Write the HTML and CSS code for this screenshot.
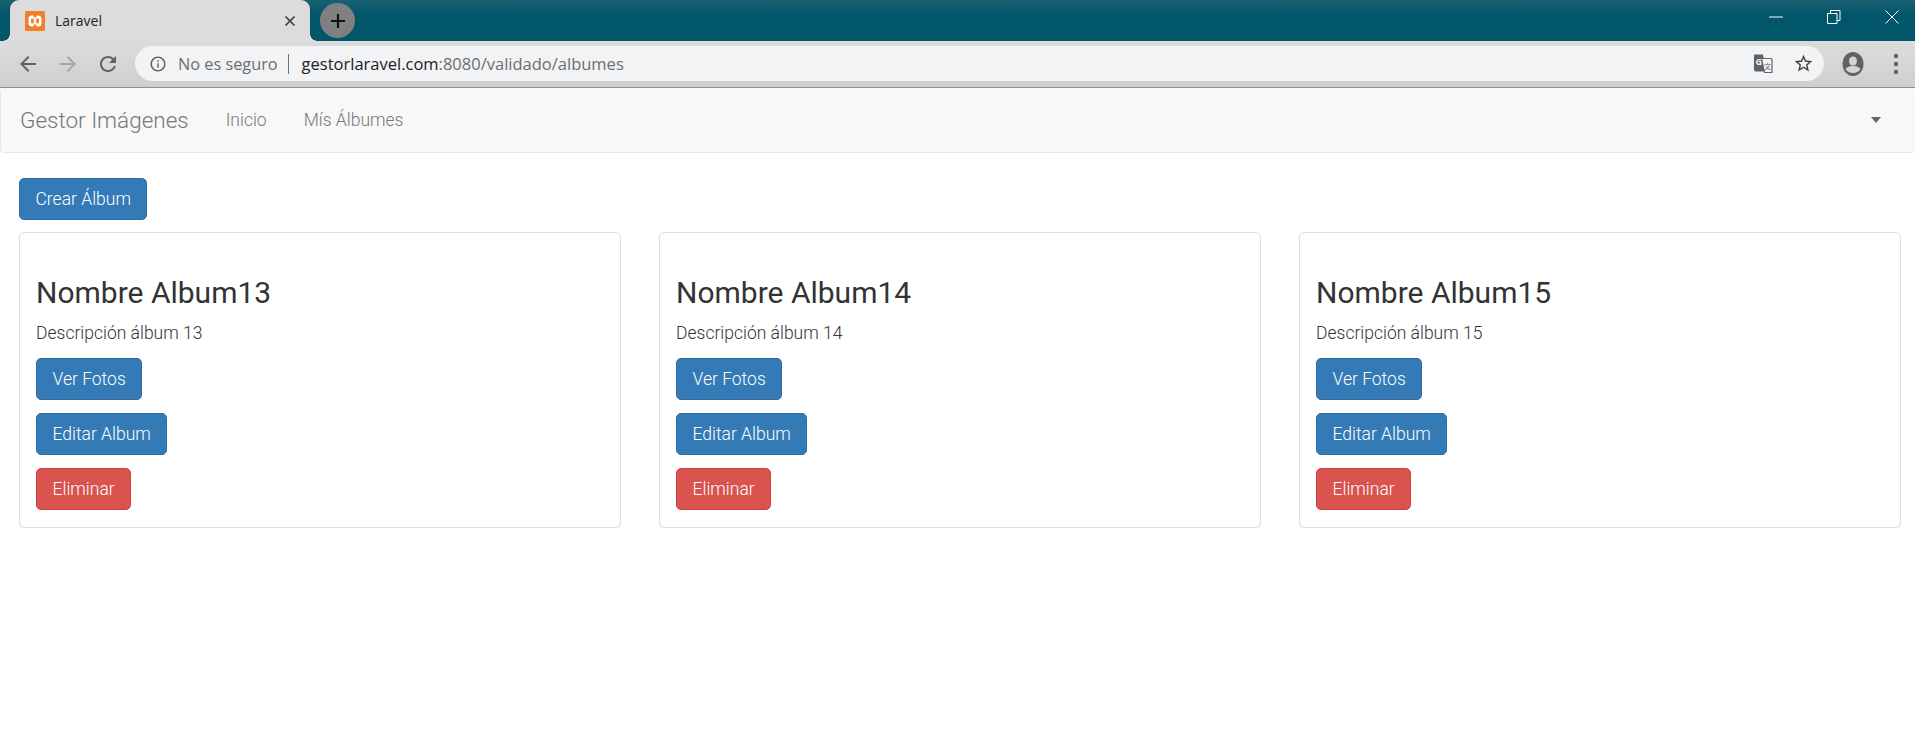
FILE: index.html
```html
<!DOCTYPE html>
<html lang="es">
<head>
    <meta charset="UTF-8">
    <title>Laravel</title>
    <link rel="stylesheet" href="styles.css">
</head>
<body>
<div class="titlebar">
    <div class="tab">
        <svg class="favicon" viewBox="0 0 20 20">
            <rect width="20" height="20" rx="1.500" fill="#f37f2b"/>
            <rect x="3.500" y="4.500" width="13" height="11" rx="3.500" fill="#fff"/>
            <path d="M8 4h4l-1 2.500H9zM8 16h4l-1-2.500H9z" fill="#f37f2b"/>
            <rect x="6" y="7.500" width="2.800" height="5" rx="1.200" fill="#f37f2b"/>
            <rect x="11.200" y="7.500" width="2.800" height="5" rx="1.200" fill="#f37f2b"/>
        </svg>
        <span class="tab-title">Laravel</span>
        <svg class="tab-close" viewBox="0 0 12 12"><path d="M1.500 1.500l9 9m0-9l-9 9" stroke="#3c4043" stroke-width="1.700"/></svg>
    </div>
    <div class="newtab">
        <svg viewBox="0 0 16 16"><path d="M8 1v14M1 8h14" stroke="#111" stroke-width="2.200"/></svg>
    </div>
    <div class="window-controls">
        <svg viewBox="0 0 14 14"><path d="M0 7h14" stroke="#fff"/></svg>
        <svg viewBox="0 0 14 14"><path d="M.5 3.500h9.500v10H.5zM3.500 3.500V.5h9.500v10h-3" fill="none" stroke="#fff"/></svg>
        <svg viewBox="0 0 14 14"><path d="M.5 .5l13 13m0-13l-13 13" stroke="#fff"/></svg>
    </div>
</div>

<div class="toolbar">
    <svg class="tool-icon" viewBox="0 0 24 24"><path fill="#5f6368" d="M20 11H7.830l5.590-5.590L12 4l-8 8 8 8 1.410-1.410L7.830 13H20v-2z"/></svg>
    <svg class="tool-icon" viewBox="0 0 24 24"><path fill="#a4a6a8" d="M4 11h12.170l-5.590-5.590L12 4l8 8-8 8-1.410-1.410L16.170 13H4v-2z"/></svg>
    <svg class="tool-icon" viewBox="0 0 24 24"><path fill="#5f6368" d="M17.650 6.350A7.958 7.958 0 0 0 12 4c-4.420 0-7.990 3.580-7.990 8s3.570 8 7.990 8c3.730 0 6.840-2.550 7.730-6h-2.080A5.990 5.990 0 0 1 12 18c-3.310 0-6-2.690-6-6s2.690-6 6-6c1.660 0 3.140.69 4.220 1.780L13 11h7V4l-2.350 2.350z"/></svg>
    <div class="omnibox">
        <svg class="info-icon" viewBox="0 0 24 24"><path fill="#5f6368" d="M11 7h2v2h-2zm0 4h2v6h-2zm1-9C6.480 2 2 6.480 2 12s4.480 10 10 10 10-4.480 10-10S17.520 2 12 2zm0 18c-4.410 0-8-3.590-8-8s3.590-8 8-8 8 3.590 8 8-3.590 8-8 8z"/></svg>
        <span class="security">No es seguro</span>
        <span class="divider"></span>
        <span class="url"><span class="host">gestorlaravel.com</span>:8080/validado/albumes</span>
        <svg class="translate-icon" viewBox="0 0 20 20">
            <path d="M1 1h9l3 17H3a2 2 0 0 1-2-2z" fill="#5f6368"/>
            <path d="M8.500 5H18a1 1 0 0 1 1 1v13H11.500z" fill="#f1f3f4" stroke="#5f6368" stroke-width="1.200"/>
            <text x="2.500" y="11" class="translate-g">G</text>
            <text x="11" y="15" class="translate-a">文</text>
        </svg>
        <svg class="star-icon" viewBox="0 0 24 24"><path fill="#3c4043" d="M22 9.240l-7.190-.62L12 2 9.190 8.630 2 9.240l5.460 4.730L5.820 21 12 17.270 18.180 21l-1.630-7.030L22 9.240zM12 15.400l-3.760 2.270 1-4.280-3.320-2.880 4.380-.38L12 6.100l1.710 4.040 4.380.38-3.320 2.880 1 4.280L12 15.400z"/></svg>
    </div>
    <svg class="avatar" viewBox="0 0 22 24">
        <ellipse cx="11" cy="12" rx="10.500" ry="12" fill="#5f6368"/>
        <ellipse cx="11" cy="9" rx="4" ry="4.500" fill="#d4d4d4"/>
        <path d="M3.500 17c2-2.500 5-3 7.500-3s5.500.5 7.500 3c-1.500 2.500-4.500 4-7.500 4s-6-1.500-7.500-4z" fill="#d4d4d4"/>
    </svg>
    <svg class="menu-dots" viewBox="0 0 6 24">
        <circle cx="3" cy="4" r="2.200" fill="#5f6368"/>
        <circle cx="3" cy="12" r="2.200" fill="#5f6368"/>
        <circle cx="3" cy="20" r="2.200" fill="#5f6368"/>
    </svg>
</div>

<nav class="navbar">
    <a class="brand">Gestor Imágenes</a>
    <a class="nav-link">Inicio</a>
    <a class="nav-link">Mís Álbumes</a>
    <span class="caret"></span>
</nav>

<main class="content">
    <a class="btn btn-primary">Crear Álbum</a>
    <div class="albums">
        <div class="panel">
            <h3>Nombre Album13</h3>
            <p>Descripción álbum 13</p>
            <a class="btn btn-primary">Ver Fotos</a>
            <a class="btn btn-primary">Editar Album</a>
            <a class="btn btn-danger">Eliminar</a>
        </div>
        <div class="panel">
            <h3>Nombre Album14</h3>
            <p>Descripción álbum 14</p>
            <a class="btn btn-primary">Ver Fotos</a>
            <a class="btn btn-primary">Editar Album</a>
            <a class="btn btn-danger">Eliminar</a>
        </div>
        <div class="panel">
            <h3>Nombre Album15</h3>
            <p>Descripción álbum 15</p>
            <a class="btn btn-primary">Ver Fotos</a>
            <a class="btn btn-primary">Editar Album</a>
            <a class="btn btn-danger">Eliminar</a>
        </div>
    </div>
</main>
</body>
</html>
```

FILE: styles.css
```css
body {
    margin: 0;
    background-color: #fff;
    font-family: Roboto, sans-serif;
    font-weight: 300;
    font-size: 17.5px;
    color: #333;
}

/* browser chrome */
.titlebar {
    display: flex;
    height: 41px;
    padding-left: 10px;
    background: linear-gradient(#1a6272, #02566a 14px);
}

.tab {
    position: relative;
    display: flex;
    align-items: center;
    width: 300px;
    box-sizing: border-box;
    padding: 0 14px 0 15px;
    background-color: #dcdcdc;
    border-radius: 9px 9px 0 0;
}

/* flared bottom corners of the tab */
.tab::before,
.tab::after {
    content: "";
    position: absolute;
    bottom: 0;
    width: 7px;
    height: 7px;
}

.tab::before {
    left: -7px;
    background: radial-gradient(circle at 0 0, transparent 6.500px, #dcdcdc 7px);
}

.tab::after {
    right: -7px;
    background: radial-gradient(circle at 100% 0, transparent 6.500px, #dcdcdc 7px);
}

.favicon {
    width: 20px;
    height: 20px;
}

.tab-title {
    margin-left: 10px;
    font-family: "Open Sans", sans-serif;
    font-weight: 400;
    font-size: 14px;
    color: #222;
}

.tab-close {
    width: 12px;
    height: 12px;
    margin-left: auto;
}

.newtab {
    display: flex;
    align-items: center;
    justify-content: center;
    width: 35px;
    height: 35px;
    margin: 3px 0 0 10px;
    background-color: #808080;
    border-radius: 50%;
}

.newtab svg {
    width: 16px;
    height: 16px;
}

.window-controls {
    display: flex;
    gap: 44px;
    margin: 10px 16px 0 auto;
}

.window-controls svg {
    width: 14px;
    height: 14px;
}

.toolbar {
    display: flex;
    align-items: center;
    height: 47px;
    box-sizing: border-box;
    padding: 5px 0 6px 16px;
    background: linear-gradient(#dcdcdc, #cfcfcf);
    border-bottom: 1px solid #8f8f8f;
}

.tool-icon {
    width: 24px;
    height: 24px;
    margin-right: 16px;
}

.omnibox {
    display: flex;
    align-items: center;
    width: 1689px;
    height: 35px;
    box-sizing: border-box;
    margin-left: -1px;
    padding: 0 10px 0 14px;
    background-color: #f1f3f4;
    border-radius: 18px;
    font-family: "Open Sans", sans-serif;
    font-weight: 400;
    font-size: 16.500px;
    color: #6b6e72;
}

.info-icon {
    width: 18px;
    height: 18px;
    margin-right: 11px;
}

.security {
    font-size: 16.300px;
}

.divider {
    width: 1px;
    height: 20px;
    margin: 0 13px 0 10px;
    background-color: #6b6e72;
}

.host {
    color: #202124;
}

.translate-icon {
    width: 20px;
    height: 21px;
    margin-left: auto;
    margin-right: 20px;
}

.translate-g {
    font-family: "Open Sans", sans-serif;
    font-size: 9px;
    font-weight: 700;
    fill: #f1f3f4;
}

.translate-a {
    font-family: "Noto Sans CJK SC", sans-serif;
    font-size: 7px;
    fill: #5f6368;
}

.star-icon {
    width: 21px;
    height: 21px;
}

.avatar {
    width: 22px;
    height: 24px;
    margin-left: 18px;
}

.menu-dots {
    width: 6px;
    height: 24px;
    margin-left: 29px;
}

/* page */
.navbar {
    display: flex;
    align-items: center;
    height: 64px;
    padding-left: 19px;
    background-color: #f8f8f8;
    border: 1px solid #e7e7e7;
    border-width: 0 0 1px 1px;
    border-radius: 4px;
    color: #777;
}

.brand {
    font-size: 22.500px;
    margin-right: 37px;
}

.nav-link {
    margin-right: 37px;
}

.caret {
    margin-left: auto;
    margin-right: 34px;
    border-top: 6px solid #666;
    border-left: 5px solid transparent;
    border-right: 5px solid transparent;
}

.content {
    padding: 25px 14px 0 19px;
}

.btn {
    display: block;
    width: fit-content;
    box-sizing: border-box;
    height: 42px;
    padding: 0 15.500px;
    line-height: 40px;
    color: #fff;
    border: 1px solid;
    border-radius: 5px;
}

.btn-primary {
    background-color: #337ab7;
    border-color: #2e6da4;
}

.btn-danger {
    background-color: #d9534f;
    border-color: #d43f3a;
}

.albums {
    display: grid;
    grid-template-columns: repeat(3, 602px);
    gap: 38px;
    margin-top: 12px;
}

.panel {
    display: flex;
    flex-direction: column;
    gap: 13px;
    height: 296px;
    box-sizing: border-box;
    padding: 0 16px;
    border: 1px solid #ddd;
    border-radius: 5px;
    box-shadow: 0 1px 1px rgba(0, 0, 0, .05);
}

.panel h3 {
    margin: 42px 0 0;
    font-size: 30px;
    font-weight: 400;
    line-height: 36px;
}

.panel p {
    margin: -3px 0 0;
    font-size: 17.500px;
    line-height: 24px;
}
```
